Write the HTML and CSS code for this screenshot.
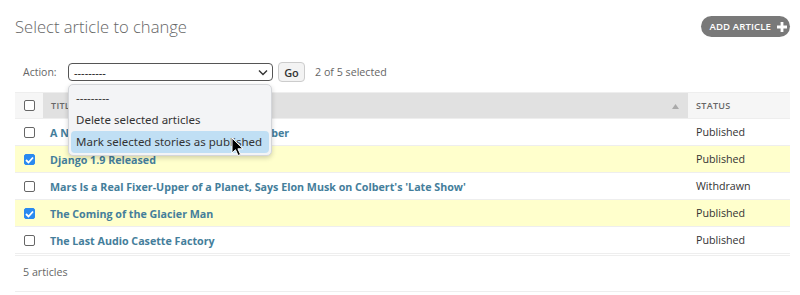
FILE: index.html
```html
<!DOCTYPE html>
<html>
<head>
<meta charset="utf-8">
<link rel="stylesheet" href="styles.css">
</head>
<body>
<div class="content">
  <div class="top">
    <h1>Select article to change</h1>
    <a class="addlink">ADD ARTICLE <svg width="10" height="10" viewBox="0 0 10 10"><path d="M3.6 0h2.8v3.6H10v2.8H6.4V10H3.6V6.4H0V3.6h3.6z" fill="#fff"/></svg></a>
  </div>
  <div class="actions">
    <label>Action:</label>
    <div class="select-wrap">
      <div class="select">---------<svg class="chev" width="10" height="7" viewBox="0 0 10 7"><path d="M1 1.5l4 4 4-4" stroke="#333" stroke-width="1.4" fill="none"/></svg></div>
      <div class="menu">
        <div class="opt">---------</div>
        <div class="opt">Delete selected articles</div>
        <div class="opt hl">Mark selected stories as published</div>
        <svg class="cursor" width="14" height="20" viewBox="0 0 14 20"><path d="M1 1v15l3.5-3.3 2.6 5.8 2.4-1.1-2.6-5.6H12z" fill="#000" stroke="#fff" stroke-width="1"/></svg>
      </div>
    </div>
    <button class="go">Go</button>
    <span class="counter">2 of 5 selected</span>
  </div>
  <table class="results">
    <thead>
      <tr>
        <th class="cb"><span class="box"></span></th>
        <th class="sorted"><div class="th-in"><span>TITLE</span><svg class="arrow" width="7" height="5" viewBox="0 0 7 5"><path d="M0 5L3.5 0 7 5z" fill="#aaa"/></svg></div></th>
        <th class="status">STATUS</th>
      </tr>
    </thead>
    <tbody>
      <tr><td class="cb"><span class="box"></span></td><td><a>A New Discovery in the Deep Burial Chamber</a></td><td class="st">Published</td></tr>
      <tr class="sel"><td class="cb"><span class="box on"><svg width="9" height="8" viewBox="0 0 9 8"><path d="M1 4l2.5 2.5L8 1.5" stroke="#fff" stroke-width="1.8" fill="none"/></svg></span></td><td><a>Django 1.9 Released</a></td><td class="st">Published</td></tr>
      <tr><td class="cb"><span class="box"></span></td><td><a>Mars Is a Real Fixer-Upper of a Planet, Says Elon Musk on Colbert's 'Late Show'</a></td><td class="st">Withdrawn</td></tr>
      <tr class="sel"><td class="cb"><span class="box on"><svg width="9" height="8" viewBox="0 0 9 8"><path d="M1 4l2.5 2.5L8 1.5" stroke="#fff" stroke-width="1.8" fill="none"/></svg></span></td><td><a>The Coming of the Glacier Man</a></td><td class="st">Published</td></tr>
      <tr><td class="cb"><span class="box"></span></td><td><a>The Last Audio Casette Factory</a></td><td class="st">Published</td></tr>
    </tbody>
  </table>
  <p class="paginator">5 articles</p>
</div>
</body>
</html>
```

FILE: styles.css
```css
html, body {
  margin: 0;
  padding: 0;
  background: #fff;
  font-family: "Open Sans", "Noto Sans", sans-serif;
  color: #333;
}
.content {
  padding: 0 10px 0 15px;
}
.top {
  display: flex;
  justify-content: space-between;
  align-items: flex-start;
  padding-top: 14px;
}
h1 {
  margin: 0;
  font-weight: 300;
  font-size: 16.6px;
  line-height: 26px;
  color: #666;
}
.addlink {
  display: flex;
  align-items: center;
  gap: 6px;
  margin-top: 2px;
  height: 21px;
  padding: 0 3px 0 9px;
  border-radius: 11px;
  background: #797979;
  color: #fff;
  font-size: 9.6px;
  font-weight: 600;
  letter-spacing: 0.1px;
}
.actions {
  display: flex;
  align-items: center;
  margin-top: 22px;
  height: 20px;
  padding-left: 8px;
  font-size: 10.5px;
}
.actions label {
  color: #666;
  width: 45px;
}
.select-wrap {
  position: relative;
}
.select {
  width: 205px;
  height: 18px;
  box-sizing: border-box;
  border: 1px solid #555;
  border-radius: 4px;
  display: flex;
  align-items: center;
  justify-content: space-between;
  padding: 0 4px 0 5px;
  font-family: "Noto Sans", sans-serif;
  font-size: 11px;
  color: #222;
  background: #fff;
}
.chev { margin-top: 1px; }
.menu {
  position: absolute;
  left: 0;
  top: 21px;
  width: 204px;
  box-sizing: border-box;
  background: #f3f4f6;
  border: 1px solid #d4d6da;
  border-radius: 5px;
  box-shadow: 0 2px 5px rgba(0,0,0,0.18);
  padding: 2px 2px 2px;
  font-family: "Noto Sans", sans-serif;
  font-size: 11.5px;
  color: #333;
  z-index: 5;
}
.opt {
  height: 22px;
  line-height: 22px;
  padding: 0 5px;
  border-radius: 4px;
  white-space: nowrap;
}
.opt.hl { background: #c0dff4; }
.cursor {
  position: absolute;
  left: 162px;
  top: 52px;
}
.go {
  margin-left: 5px;
  height: 20px;
  width: 27px;
  padding: 0;
  border: 1px solid #ccc;
  border-radius: 4px;
  background: #f3f3f3;
  font-family: "Open Sans", sans-serif;
  font-size: 11px;
  font-weight: 600;
  color: #333;
}
.counter {
  margin-left: 10px;
  color: #666;
  font-size: 10.7px;
}
.results {
  margin-top: 10px;
  width: 775px;
  border-collapse: collapse;
  font-size: 11px;
}
.results th {
  height: 25px;
  padding: 0;
  background: #f6f6f6;
  border-top: 1px solid #eee;
  border-bottom: 1px solid #eee;
  text-align: left;
  font-size: 9px;
  font-weight: 600;
  color: #666;
  letter-spacing: 0.3px;
}
.results th.sorted { background: #e1e1e1; }
.th-in {
  display: flex;
  align-items: center;
  justify-content: space-between;
  padding: 0 9px 0 8px;
}
.arrow { margin-top: 1px; }
.results th.status { width: 94px; padding-left: 8px; }
.results .cb { width: 28px; padding: 0 0 0 9px; box-sizing: border-box; }
.results td {
  height: 26px;
  padding: 0 0 0 7px;
  border-bottom: 1px solid #eee;
  vertical-align: middle;
}
.results td.st { padding-left: 8px; color: #333; font-size: 10.7px; }
.results td a {
  color: #447e9b;
  font-weight: 700;
  font-size: 10.7px;
}
.results tr.sel td { background: #ffffcc; }
.box {
  display: block;
  width: 9px;
  height: 9px;
  border: 1.5px solid #666;
  border-radius: 2px;
  background: #fff;
  position: relative;
}
.box.on {
  background: #2a8af0;
  border-color: #2a8af0;
}
.box svg { position: absolute; left: 0; top: 1px; }
.paginator {
  margin: 0;
  padding: 9px 0 0 8px;
  height: 26px;
  border-top: 1px solid #eee;
  margin-top: 1px;
  font-size: 10.7px;
  color: #666;
  width: 767px;
  border-bottom: 1px solid #eee;
}
```
